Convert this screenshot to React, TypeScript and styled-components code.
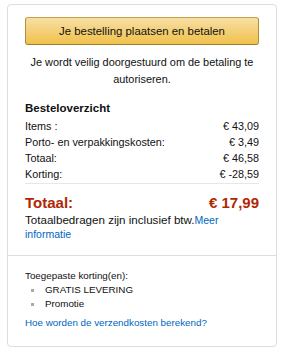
import React from "react";
import styled, { createGlobalStyle } from "styled-components";

const Global = createGlobalStyle`
  html, body { margin: 0; padding: 0; background: #fff; }
  body { font-family: "Liberation Sans", Arial, sans-serif; color: #111; }
  * { box-sizing: border-box; }
`;

const Page = styled.div`
  padding: 4px 15px 0 7px;
`;

const Box = styled.div`
  width: 270px;
  border: 1px solid #ddd;
  border-radius: 4px;
  display: flex;
  flex-direction: column;
`;

const Section = styled.div<{ $divided?: boolean }>`
  padding: ${(p) => (p.$divided ? "13px 17px 16px" : "12px 17px 14px")};
  border-top: ${(p) => (p.$divided ? "1px solid #ddd" : "none")};
`;

const PlaceButton = styled.button`
  display: block;
  width: 100%;
  height: 28px;
  border: 1px solid #a88734;
  border-color: #c4a04a #b08f3a #9c7e31;
  border-radius: 3px;
  background: linear-gradient(to bottom, #f7dfa5, #f0c14b);
  font-family: inherit;
  font-size: 11.4px;
  color: #111;
  padding: 0;
  cursor: pointer;
`;

const Notice = styled.p`
  margin: 9px 0 0;
  font-size: 10.9px;
  line-height: 17px;
  text-align: center;
`;

const Heading = styled.h3`
  margin: 11px 0 0;
  font-size: 11.5px;
  font-weight: 700;
  line-height: 19px;
`;

const Row = styled.div`
  display: flex;
  justify-content: space-between;
  font-size: 10.8px;
  line-height: 16px;
`;

const Divider = styled.hr`
  border: 0;
  border-top: 1px solid #e7e7e7;
  margin: 1px 0 0;
`;

const GrandRow = styled.div`
  display: flex;
  justify-content: space-between;
  margin-top: 8px;
  font-size: 15px;
  font-weight: 700;
  line-height: 21px;
  color: #b12704;
`;

const TaxNote = styled.p`
  margin: 0;
  font-size: 11.6px;
  line-height: 14px;
`;

const SmallLink = styled.a`
  font-size: 10.5px;
  color: #0066c0;
  text-decoration: none;
`;

const Label = styled.div`
  font-size: 9.8px;
  line-height: 14px;
`;

const List = styled.ul`
  list-style: none;
  margin: 0;
  padding: 0;
`;

const Item = styled.li`
  position: relative;
  font-size: 9.8px;
  line-height: 14px;
  padding-left: 20px;
  &::before {
    content: "";
    position: absolute;
    left: 6px;
    top: 6px;
    width: 3px;
    height: 3px;
    background: #aaa;
  }
`;

const HelpLink = styled.a`
  display: block;
  margin-top: 5px;
  font-size: 9.8px;
  line-height: 14px;
  color: #0066c0;
  text-decoration: none;
`;

const rows: [string, string][] = [
  ["Items :", "€ 43,09"],
  ["Porto- en verpakkingskosten:", "€ 3,49"],
  ["Totaal:", "€ 46,58"],
  ["Korting:", "€ -28,59"],
];

export default function App() {
  return (
    <Page>
      <Global />
      <Box>
        <Section>
          <PlaceButton>Je bestelling plaatsen en betalen</PlaceButton>
          <Notice>
            Je wordt veilig doorgestuurd om de betaling te autoriseren.
          </Notice>
          <Heading>Besteloverzicht</Heading>
          {rows.map(([l, v]) => (
            <Row key={l}>
              <span>{l}</span>
              <span>{v}</span>
            </Row>
          ))}
          <Divider />
          <GrandRow>
            <span>Totaal:</span>
            <span>€ 17,99</span>
          </GrandRow>
          <TaxNote>
            Totaalbedragen zijn inclusief btw.
            <SmallLink href="#">
              {"Meer"}
              {" "}
              {"informatie"}
            </SmallLink>
          </TaxNote>
        </Section>
        <Section $divided>
          <Label>Toegepaste korting(en):</Label>
          <List>
            <Item>GRATIS LEVERING</Item>
            <Item>Promotie</Item>
          </List>
          <HelpLink href="#">Hoe worden de verzendkosten berekend?</HelpLink>
        </Section>
      </Box>
    </Page>
  );
}
